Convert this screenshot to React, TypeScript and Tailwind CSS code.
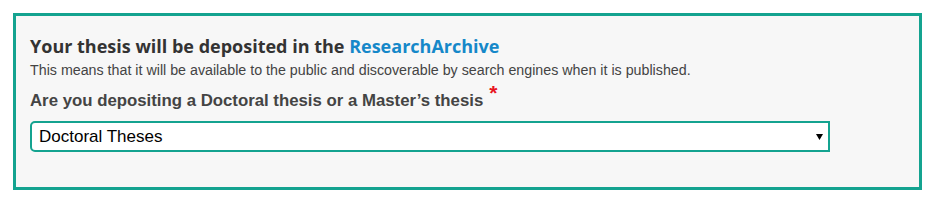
export default function App() {
  return (
    <div className="w-[932px] h-[200px] bg-white pt-[13px] pl-[13px]">
      <div className="w-[909px] h-[177px] border-[3px] border-[#14a390] bg-[#f7f7f7] px-[14px] pt-[18px]">
        <h2 className="font-['Open_Sans',sans-serif] font-bold text-[18px] leading-[24px] text-[#333]">
          Your thesis will be deposited in the{' '}
          <a className="text-[#1588c9]">ResearchArchive</a>
        </h2>
        <p className="mt-[4px] font-['Liberation_Sans',Arial,sans-serif] text-[14.25px] leading-[16px] text-[#444]">
          This means that it will be available to the public and discoverable by search engines when it is published.
        </p>
        <label className="mt-[13px] block font-['Liberation_Sans',Arial,sans-serif] font-bold text-[16.8px] leading-[20px] text-[#444]">
          Are you depositing a Doctoral thesis or a Master’s thesis
          <span className="ml-[6px] relative -top-[6px] leading-[0] text-[#e8141e] text-[21px] font-bold">*</span>
        </label>
        <div className="mt-[10px] w-[800px] h-[31px] border-2 border-[#14a390] rounded-l-[5px] bg-white flex items-center justify-between pl-[7px] pr-[5px]">
          <span className="font-['Liberation_Sans',Arial,sans-serif] text-[17px] text-black">Doctoral Theses</span>
          <svg width="7" height="6" viewBox="0 0 7 6" className="mt-[1px]">
            <path d="M0 0h7L3.5 6z" fill="#000" />
          </svg>
        </div>
      </div>
    </div>
  );
}
